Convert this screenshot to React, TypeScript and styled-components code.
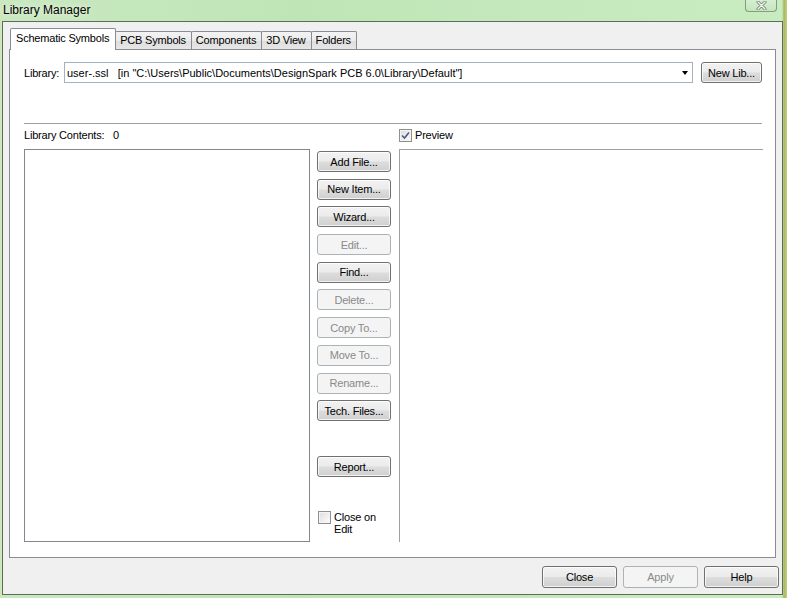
import React from "react";
import styled, { createGlobalStyle } from "styled-components";

const GlobalStyle = createGlobalStyle`
  html, body {
    margin: 0;
    padding: 0;
  }
  body {
    width: 787px;
    height: 598px;
    overflow: hidden;
    background: #b9dfb0;
    font-family: "Liberation Sans", Arial, sans-serif;
    font-size: 11px;
    color: #000;
  }
`;

const Window = styled.div`
  width: 787px;
  height: 598px;
  box-sizing: border-box;
  display: flex;
  flex-direction: column;
  padding: 0 4px 3px 2px;
  background: linear-gradient(
    90deg,
    #d3e6b4 0px,
    #c9e8c0 2px,
    #bfe5b6 300px,
    #c6e9bd 600px,
    #c8ebc0 782px,
    #a8b860 784px,
    #c4cf80 787px
  );
`;

const TitleBar = styled.div`
  height: 21px;
  display: flex;
  align-items: center;
  padding-left: 1px;
  font-size: 12px;
  text-shadow: 0 0 6px rgba(255, 255, 255, 0.9);
`;

const Title = styled.span`
  flex: 1;
  margin-top: -2px;
`;

const CloseBox = styled.div`
  align-self: flex-start;
  width: 32px;
  height: 12px;
  margin-right: 6px;
  box-sizing: border-box;
  border: 1px solid rgba(70, 90, 70, 0.55);
  border-top: none;
  border-radius: 0 0 4px 4px;
  background: linear-gradient(#d6efd0, #c4e6bc);
  display: flex;
  align-items: center;
  justify-content: center;
`;

const Client = styled.div`
  flex: 1;
  display: flex;
  flex-direction: column;
  background: #f0f0f0;
  border: 1px solid #5c6d58;
`;

const TabArea = styled.div`
  flex: 1;
  display: flex;
  flex-direction: column;
  padding: 7px 6px 0 6px;
`;

const TabStrip = styled.div`
  height: 20px;
  display: flex;
  align-items: flex-end;
  padding-left: 1px;
`;

const Tab = styled.div<{ $active?: boolean }>`
  position: relative;
  box-sizing: border-box;
  height: ${({ $active }) => ($active ? "22px" : "18px")};
  margin-bottom: ${({ $active }) => ($active ? "-1px" : "0")};
  margin-right: -1px;
  padding: ${({ $active }) => ($active ? "3px 6px 0 5px" : "2px 5px 0 4px")};
  border: 1px solid #898c95;
  border-bottom: none;
  border-radius: 2px 2px 0 0;
  background: ${({ $active }) =>
    $active ? "#ffffff" : "linear-gradient(#f3f3f3, #ebebeb 50%, #dedede 51%, #e6e6e6)"};
  z-index: ${({ $active }) => ($active ? 2 : 1)};
  letter-spacing: -0.2px;
  white-space: nowrap;
`;

const Panel = styled.div`
  flex: 1;
  display: flex;
  flex-direction: column;
  background: #ffffff;
  border: 1px solid #898c95;
  padding: 12px 12px 15px 14px;
`;

const LibRow = styled.div`
  height: 21px;
  display: flex;
  align-items: center;
`;

const Label = styled.span`
  width: 40px;
  letter-spacing: -0.2px;
`;

const Combo = styled.div`
  width: 629px;
  height: 21px;
  box-sizing: border-box;
  display: flex;
  align-items: center;
  padding-left: 2px;
  border: 1px solid #a3b1c2;
  background: #fff;
  white-space: pre;
`;

const ComboText = styled.span`
  flex: 1;
`;

const Arrow = styled.span`
  width: 0;
  height: 0;
  margin-right: 4px;
  border-left: 3.5px solid transparent;
  border-right: 3.5px solid transparent;
  border-top: 4px solid #000;
`;

const Separator = styled.div`
  height: 1px;
  margin-top: 40px;
  background: #a0a0a0;
  margin-right: 1px;
`;

const Content = styled.div`
  flex: 1;
  display: grid;
  grid-template-columns: 286px 74px 1fr;
  grid-template-rows: 25px 1fr;
  column-gap: 7px;
`;

const HeaderCell = styled.div<{ $span?: number }>`
  grid-column: span ${({ $span }) => $span ?? 1};
  display: flex;
  align-items: center;
  gap: 3px;
  padding-bottom: 3px;
  letter-spacing: -0.2px;
`;

const PreviewHeader = styled(HeaderCell)`
  margin-left: 1px;
`;

const ListBox = styled.div`
  border: 1px solid #828790;
  background: #fff;
`;

const ButtonColumn = styled.div`
  display: flex;
  flex-direction: column;
  gap: 6.7px;
  padding-top: 2px;
  padding-bottom: 7px;
`;

const Slot = styled.div`
  height: 21.6px;
`;

const PreviewBox = styled.div`
  margin-left: 1px;
  border-top: 1px solid #a0a0a0;
  border-left: 1px solid #a0a0a0;
`;

const WinButton = styled.button<{ $w?: number; $h?: number }>`
  box-sizing: border-box;
  width: ${({ $w }) => ($w ? `${$w}px` : "100%")};
  height: ${({ $h }) => $h ?? 21}px;
  padding: 0;
  margin: 0;
  font-family: "Liberation Sans", Arial, sans-serif;
  font-size: 11px;
  letter-spacing: -0.2px;
  color: #000;
  border: 1px solid #707070;
  border-radius: 3px;
  background: linear-gradient(#f2f2f2 0%, #ebebeb 48%, #dddddd 52%, #cfcfcf 100%);
  box-shadow: inset 0 0 0 1px rgba(255, 255, 255, 0.75);

  &:disabled {
    color: #8a8a8a;
    border-color: #adb2b5;
    background: #f4f4f4;
    box-shadow: none;
  }
`;

const CheckLine = styled.label<{ $top?: boolean }>`
  display: flex;
  align-items: ${({ $top }) => ($top ? "flex-start" : "center")};
  gap: 3px;
  line-height: 12px;
  letter-spacing: -0.2px;
`;

const CloseOnEdit = styled(CheckLine)`
  margin-top: auto;
  padding-left: 1px;
`;

const Box = styled.span`
  flex: none;
  width: 13px;
  height: 13px;
  box-sizing: border-box;
  border: 1px solid #8e8f8f;
  background: linear-gradient(135deg, #dcdcdc, #fdfdfd);
  box-shadow: inset 0 0 0 1px #f4f4f4;
  display: flex;
  align-items: center;
  justify-content: center;
`;

const Footer = styled.div`
  height: 36px;
  box-sizing: border-box;
  display: flex;
  justify-content: flex-end;
  gap: 6px;
  padding: 8px 3px 0 0;
`;

function CheckBox({ checked }: { checked?: boolean }) {
  return (
    <Box>
      {checked && (
        <svg width="9" height="9" viewBox="0 0 9 9">
          <path d="M1 4.5 L3.5 7 L8 1.5" fill="none" stroke="#4a5d85" strokeWidth="1.6" />
        </svg>
      )}
    </Box>
  );
}

const tabs = ["Schematic Symbols", "PCB Symbols", "Components", "3D View", "Folders"];

const actions: { label: string; enabled: boolean }[] = [
  { label: "Add File...", enabled: true },
  { label: "New Item...", enabled: true },
  { label: "Wizard...", enabled: true },
  { label: "Edit...", enabled: false },
  { label: "Find...", enabled: true },
  { label: "Delete...", enabled: false },
  { label: "Copy To...", enabled: false },
  { label: "Move To...", enabled: false },
  { label: "Rename...", enabled: false },
  { label: "Tech. Files...", enabled: true },
];

export default function App() {
  return (
    <>
      <GlobalStyle />
      <Window>
        <TitleBar>
          <Title>Library Manager</Title>
          <CloseBox>
            <svg width="11" height="9" viewBox="0 0 11 9">
              <path d="M2 1 L9 8 M9 1 L2 8" stroke="#6d7f6d" strokeWidth="3" strokeLinecap="round" />
              <path d="M2 1 L9 8 M9 1 L2 8" stroke="#f4f8f2" strokeWidth="1.4" strokeLinecap="round" />
            </svg>
          </CloseBox>
        </TitleBar>

        <Client>
          <TabArea>
            <TabStrip>
              {tabs.map((t, i) => (
                <Tab key={t} $active={i === 0}>
                  {t}
                </Tab>
              ))}
            </TabStrip>

            <Panel>
              <LibRow>
                <Label>Library:</Label>
                <Combo>
                  <ComboText>
                    {'user-.ssl   [in "C:\\Users\\Public\\Documents\\DesignSpark PCB 6.0\\Library\\Default"]'}
                  </ComboText>
                  <Arrow />
                </Combo>
                <WinButton $w={61} $h={21} style={{ marginLeft: 8 }}>
                  New Lib...
                </WinButton>
              </LibRow>

              <Separator />

              <Content>
                <HeaderCell $span={2}>
                  Library Contents:&nbsp;&nbsp; 0
                </HeaderCell>
                <PreviewHeader>
                  <CheckLine>
                    <CheckBox checked />
                    Preview
                  </CheckLine>
                </PreviewHeader>

                <ListBox />

                <ButtonColumn>
                  {actions.map((a) => (
                    <WinButton key={a.label} disabled={!a.enabled}>
                      {a.label}
                    </WinButton>
                  ))}
                  <Slot />
                  <WinButton>Report...</WinButton>
                  <CloseOnEdit $top>
                    <CheckBox />
                    Close on Edit
                  </CloseOnEdit>
                </ButtonColumn>

                <PreviewBox />
              </Content>
            </Panel>
          </TabArea>

          <Footer>
            <WinButton $w={75} $h={22}>Close</WinButton>
            <WinButton $w={75} $h={22} disabled>
              Apply
            </WinButton>
            <WinButton $w={75} $h={22}>Help</WinButton>
          </Footer>
        </Client>
      </Window>
    </>
  );
}
